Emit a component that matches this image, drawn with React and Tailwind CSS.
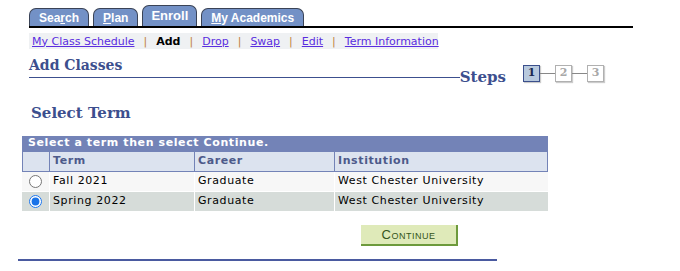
import React from 'react';

const tabs = [
  { label: 'Search', u: 3 },
  { label: 'Plan', u: 0 },
  { label: 'Enroll', u: -1, active: true },
  { label: 'My Academics', u: 0 },
];

const links = ['My Class Schedule', 'Add', 'Drop', 'Swap', 'Edit', 'Term Information'];

const rows = [
  { term: 'Fall 2021', career: 'Graduate', inst: 'West Chester University', checked: false, bg: 'bg-[#f7f7f7]' },
  { term: 'Spring 2022', career: 'Graduate', inst: 'West Chester University', checked: true, bg: 'bg-[#d6dcd9]' },
];

const Tab = ({ tab }) => {
  const text = tab.u < 0 ? tab.label : (
    <>
      {tab.label.slice(0, tab.u)}
      <span className="underline">{tab.label[tab.u]}</span>
      {tab.label.slice(tab.u + 1)}
    </>
  );
  return (
    <div
      className={`flex items-center justify-center rounded-t-[7px] border border-b-0 border-[#3a4356] bg-[#7391c6] text-white font-bold ${
        tab.active ? 'h-[21px] px-[8px] text-[13px]' : 'h-[18px] px-[9px] text-[12px]'
      }`}
    >
      {text}
    </div>
  );
};

const StepBox = ({ n, active }) => (
  <div
    className={`w-[17px] h-[17px] flex items-center justify-center text-[11px] font-bold shadow-[1px_1px_1px_rgba(0,0,0,0.2)] ${
      active ? 'bg-[#b8c9dd] border border-[#3b4f8c] text-[#1c2850]' : 'bg-white border border-[#b0b0b0] text-[#a8a8a8]'
    }`}
  >
    {n}
  </div>
);

export default function App() {
  return (
    <div className="w-[680px] h-[271px] bg-white overflow-hidden" style={{ fontFamily: '"DejaVu Sans", Verdana, sans-serif' }}>
      {/* tabs */}
      <div className="pl-[29px] pt-[5px] w-[633px]">
        <div className="flex items-end gap-[4px] font-['Liberation_Sans',Arial,sans-serif]">
          {tabs.map((t) => (
            <Tab key={t.label} tab={t} />
          ))}
        </div>
        <div className="h-[2px] bg-black" />
      </div>

      {/* sub navigation */}
      <div className="ml-[29px] mt-[5px] w-[409px] h-[16px] bg-[#eff1f3] flex items-center pl-[3px] text-[11px] leading-none whitespace-nowrap">
        {links.map((l, i) => (
          <React.Fragment key={l}>
            {i > 0 && <span className="px-[9px] text-[#c08040]">|</span>}
            {l === 'Add' ? (
              <span className="font-bold text-black">{l}</span>
            ) : (
              <span className="underline text-[#5a2de0]">{l}</span>
            )}
          </React.Fragment>
        ))}
      </div>

      {/* page title + steps */}
      <div className="ml-[29px] mt-[8px] w-[575px] flex items-end font-['DejaVu_Serif',Georgia,serif] text-[#3c4f8e]">
        <div className="flex-1 border-b-[1.5px] border-[#3c4f8e] pb-[4px]">
          <div className="text-[14px] font-bold leading-[16px]">Add Classes</div>
        </div>
        <div className="text-[15px] font-bold leading-none -mb-[7px]">Steps</div>
        <div className="flex items-center ml-[17px] -mb-[4px]">
          <StepBox n="1" active />
          <div className="w-[15px] h-px bg-[#888]" />
          <StepBox n="2" />
          <div className="w-[15px] h-px bg-[#888]" />
          <StepBox n="3" />
        </div>
      </div>

      {/* section title */}
      <div className="ml-[31px] mt-[25px] font-['DejaVu_Serif',Georgia,serif] text-[15px] font-bold text-[#3c4f8e] leading-[20px]">
        Select Term
      </div>

      {/* grid */}
      <div className="ml-[22px] mt-[13px] w-[526px] text-[11px] tracking-[0.6px]">
        <div className="h-[15px] bg-[#7383b7] text-white font-bold flex items-center pl-[6px]">
          Select a term then select Continue.
        </div>
        <div className="flex h-[21px] bg-[#dce3ef] border border-[#7383b7] text-[#4d5a8a] font-bold">
          <div className="w-[27px] border-r border-[#7383b7]" />
          <div className="w-[145px] border-r border-[#7383b7] flex items-center pl-[3px]">Term</div>
          <div className="w-[140px] border-r border-[#7383b7] flex items-center pl-[3px]">Career</div>
          <div className="flex-1 flex items-center pl-[3px]">Institution</div>
        </div>
        {rows.map((r) => (
          <div key={r.term} className={`flex h-[20px] ${r.bg} text-black border-b border-white`}>
            <div className="w-[28px] flex items-center justify-center border-r border-white">
              <input type="radio" name="term" checked={r.checked} readOnly className="w-[13px] h-[13px] m-0 accent-[#1a73e8]" />
            </div>
            <div className="w-[145px] border-r border-white flex items-center pl-[3px]">{r.term}</div>
            <div className="w-[140px] border-r border-white flex items-center pl-[3px]">{r.career}</div>
            <div className="flex-1 flex items-center pl-[3px]">{r.inst}</div>
          </div>
        ))}
      </div>

      {/* continue */}
      <div className="ml-[361px] mt-[10px]">
        <button className="w-[97px] h-[21px] bg-[#dfeab9] border-r-2 border-b-2 border-[#6d9a3c] text-[#355520] text-[13px] tracking-[0.5px] font-['Liberation_Sans',Arial,sans-serif] [font-variant:small-caps]">
          Continue
        </button>
      </div>

      {/* bottom rule */}
      <div className="ml-[18px] mt-[13px] w-[479px] h-[2px] bg-[#4a5aa0]" />
    </div>
  );
}
